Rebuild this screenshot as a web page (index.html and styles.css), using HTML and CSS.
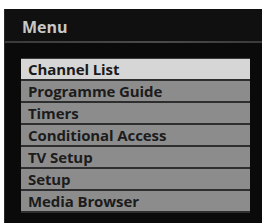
FILE: index.html
```html
<!DOCTYPE html>
<html>
<head>
<meta charset="utf-8">
<link rel="stylesheet" href="styles.css">
</head>
<body>
<div class="panel">
  <div class="header">Menu</div>
  <div class="rule"></div>
  <ul class="list">
    <li class="item selected">Channel List</li>
    <li class="item">Programme Guide</li>
    <li class="item">Timers</li>
    <li class="item">Conditional Access</li>
    <li class="item">TV Setup</li>
    <li class="item">Setup</li>
    <li class="item">Media Browser</li>
  </ul>
</div>
</body>
</html>
```
FILE: styles.css
```css
html, body {
  margin: 0;
  padding: 0;
  background: #fff;
  width: 262px;
  height: 223px;
  overflow: hidden;
}
.panel {
  margin: 9px 0 0 4px;
  height: 214px;
  background: #0a0a0a;
  border-left: 1px solid #2a2a2a;
  font-family: "Open Sans", "DejaVu Sans", sans-serif;
}
.header {
  height: 32px;
  box-sizing: border-box;
  padding: 7px 0 0 17px;
  color: #c8c8c8;
  font-size: 16px;
  font-weight: 700;
  line-height: 22px;
  background: #101010;
}
.rule {
  height: 2px;
  background: linear-gradient(90deg, #3a3a3a, #4a4a4a 60%, #3a3a3a);
}
.list {
  list-style: none;
  margin: 15px 0 0 16px;
  padding: 0;
  width: 229px;
  border-top: 1px solid #3a3a3a;
}
.item {
  height: 20px;
  box-sizing: content-box;
  border-bottom: 2px solid #2e2e2e;
  background: #8c8c8c;
  color: #1c1c1c;
  font-size: 15px;
  font-weight: 700;
  line-height: 21px;
  padding-left: 7px;
  letter-spacing: -0.1px;
  overflow: hidden;
  white-space: nowrap;
}
.item.selected {
  background: #d6d6d6;
  color: #1a1a1a;
}
```
